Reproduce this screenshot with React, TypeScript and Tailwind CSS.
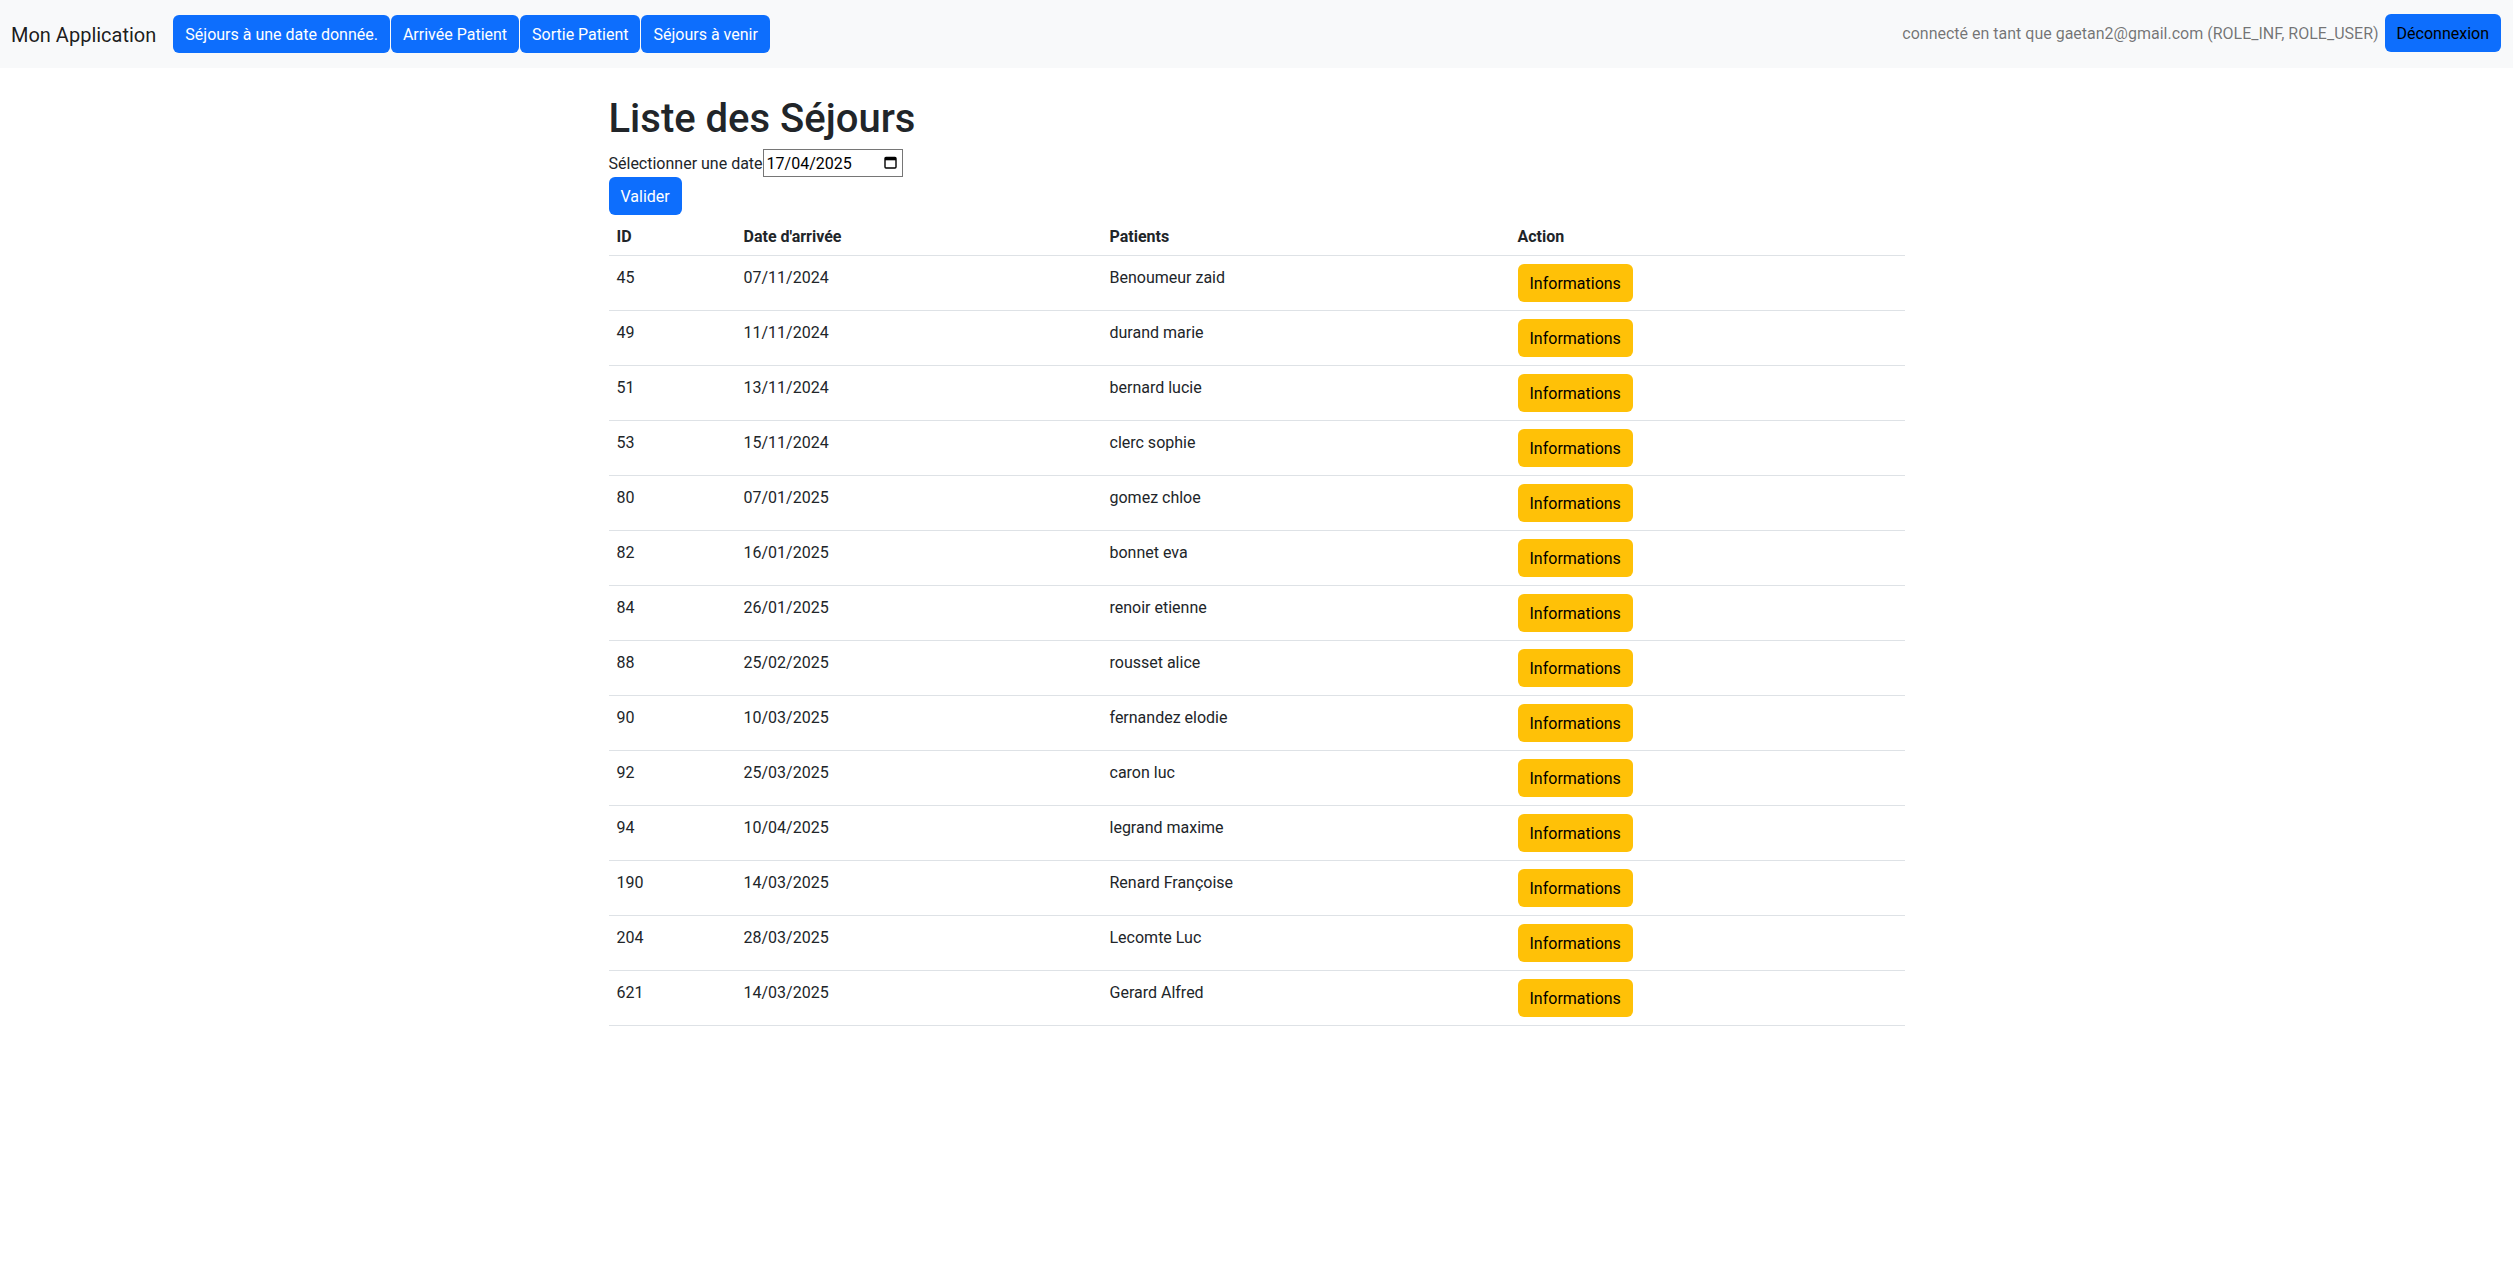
import React from "react";

const rows: [string, string, string][] = [
  ["45", "07/11/2024", "Benoumeur zaid"],
  ["49", "11/11/2024", "durand marie"],
  ["51", "13/11/2024", "bernard lucie"],
  ["53", "15/11/2024", "clerc sophie"],
  ["80", "07/01/2025", "gomez chloe"],
  ["82", "16/01/2025", "bonnet eva"],
  ["84", "26/01/2025", "renoir etienne"],
  ["88", "25/02/2025", "rousset alice"],
  ["90", "10/03/2025", "fernandez elodie"],
  ["92", "25/03/2025", "caron luc"],
  ["94", "10/04/2025", "legrand maxime"],
  ["190", "14/03/2025", "Renard Françoise"],
  ["204", "28/03/2025", "Lecomte Luc"],
  ["621", "14/03/2025", "Gerard Alfred"],
];

function CalendarIcon() {
  return (
    <svg width="13" height="13" viewBox="0 0 13 13" fill="none">
      <rect x="1" y="1.5" width="11" height="10.5" rx="1" stroke="#000" strokeWidth="1.4" />
      <rect x="1" y="1.5" width="11" height="2.8" fill="#000" />
    </svg>
  );
}

export default function App() {
  return (
    <div className="min-h-screen bg-white text-[#212529] text-[16px] leading-6 font-[family-name:Roboto,'Liberation_Sans',sans-serif]">
      <nav className="h-[68px] bg-[#f8f9fa] flex items-start justify-between pl-[11px] pr-[12px] pt-[14px]">
        <div className="flex items-center">
          <span className="text-[20px] leading-[38px] pt-[2px] text-black/90 mr-[17px]">Mon Application</span>
          <div className="flex gap-px">
            {["Séjours à une date donnée.", "Arrivée Patient", "Sortie Patient", "Séjours à venir"].map((t) => (
              <button key={t} className="h-[38px] px-3 pt-[2px] rounded-[6px] bg-[#0d6efd] text-white text-[16px]">
                {t}
              </button>
            ))}
          </div>
        </div>
        <div className="flex items-center gap-[6px]">
          <span className="text-[16px] pt-[2px] text-black/55">connecté en tant que gaetan2@gmail.com (ROLE_INF, ROLE_USER)</span>
          <button className="h-[38px] px-3 pt-[2px] rounded-[6px] bg-[#0d6efd] text-black text-[16px]">Déconnexion</button>
        </div>
      </nav>

      <main className="w-[1320px] mx-auto px-3 pt-6">
        <h1 className="text-[40px] leading-[48px] pt-[3px] font-medium mb-[5px]">Liste des Séjours</h1>
        <div className="flex items-center h-[29px]">
          <span className="pt-[2px]">Sélectionner une date</span>
          <div className="w-[140px] h-[28px] border border-[#767676] flex items-center justify-between pl-[3px] pr-[5px] text-black">
            <span className="pt-[2px]">17/04/2025</span>
            <CalendarIcon />
          </div>
        </div>
        <button className="h-[38px] px-3 pt-[2px] rounded-[6px] bg-[#0d6efd] text-white text-[16px]">Valider</button>

        <table className="w-full border-collapse mb-4 align-top">
          <thead>
            <tr>
              <th className="w-[127px] text-left font-bold px-2 pt-[10px] pb-[6px] border-b border-[#dee2e6] align-top">ID</th>
              <th className="w-[366px] text-left font-bold px-2 pt-[10px] pb-[6px] border-b border-[#dee2e6] align-top">Date d'arrivée</th>
              <th className="w-[408px] text-left font-bold px-2 pt-[10px] pb-[6px] border-b border-[#dee2e6] align-top">Patients</th>
              <th className="text-left font-bold px-2 pt-[10px] pb-[6px] border-b border-[#dee2e6] align-top">Action</th>
            </tr>
          </thead>
          <tbody>
            {rows.map(([id, date, name]) => (
              <tr key={id}>
                <td className="px-2 pt-[10px] pb-[6px] border-b border-[#dee2e6] align-top">{id}</td>
                <td className="px-2 pt-[10px] pb-[6px] border-b border-[#dee2e6] align-top">{date}</td>
                <td className="px-2 pt-[10px] pb-[6px] border-b border-[#dee2e6] align-top">{name}</td>
                <td className="p-2 border-b border-[#dee2e6] align-top">
                  <button className="h-[38px] px-3 pt-[2px] rounded-[6px] bg-[#ffc107] text-black text-[16px]">Informations</button>
                </td>
              </tr>
            ))}
          </tbody>
        </table>
      </main>
    </div>
  );
}
